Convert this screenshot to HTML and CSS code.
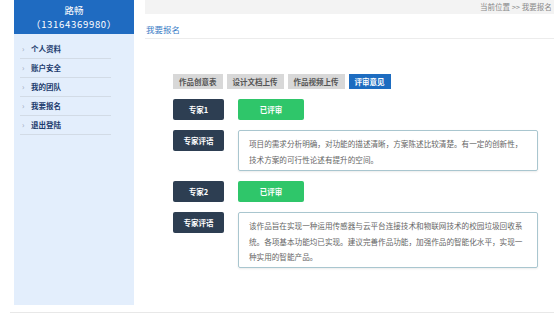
FILE: index.html
```
<!DOCTYPE html>
<html lang="zh">
<head>
<meta charset="utf-8">
<title>我要报名</title>
<link rel="stylesheet" href="styles.css">
</head>
<body>
<div class="page">
  <aside class="sidebar">
    <div class="sidebar-head">
      <div class="name">路畅</div>
      <div class="phone">（13164369980）</div>
    </div>
    <ul class="menu">
      <li><span class="arrow">›</span>个人资料</li>
      <li><span class="arrow">›</span>账户安全</li>
      <li><span class="arrow">›</span>我的团队</li>
      <li><span class="arrow">›</span>我要报名</li>
      <li><span class="arrow">›</span>退出登陆</li>
    </ul>
  </aside>
  <main class="main">
    <div class="topbar"><span class="crumb">当前位置 &gt;&gt; 我要报名</span></div>
    <div class="title">我要报名</div>
    <div class="content">
      <div class="tabs">
        <span class="tab">作品创意表</span>
        <span class="tab">设计文档上传</span>
        <span class="tab">作品视频上传</span>
        <span class="tab active">评审意见</span>
      </div>
      <div class="row">
        <span class="btn dark">专家1</span>
        <span class="btn green">已评审</span>
      </div>
      <div class="row">
        <span class="btn dark">专家评语</span>
        <div class="comment">项目的需求分析明确，对功能的描述清晰，方案陈述比较清楚。有一定的创新性，技术方案的可行性论述有提升的空间。</div>
      </div>
      <div class="row">
        <span class="btn dark">专家2</span>
        <span class="btn green">已评审</span>
      </div>
      <div class="row">
        <span class="btn dark">专家评语</span>
        <div class="comment tall">该作品旨在实现一种运用传感器与云平台连接技术和物联网技术的校园垃圾回收系统。各项基本功能均已实现。建议完善作品功能，加强作品的智能化水平，实现一种实用的智能产品。</div>
      </div>
    </div>
  </main>
</div>
<div class="footer-line"></div>
</body>
</html>
```
FILE: styles.css
```
* { box-sizing: border-box; }
html, body {
  margin: 0;
  padding: 0;
  background: #fff;
  overflow: hidden;
}
body {
  width: 554px;
  height: 319px;
  font-family: "Noto Sans CJK SC", "Noto Sans", sans-serif;
  color: #333;
}
.page {
  display: flex;
  height: 312px;
  padding-left: 14px;
}
.sidebar {
  width: 120px;
  height: 305px;
  background: #e3eefc;
  flex-shrink: 0;
}
.sidebar-head {
  height: 34px;
  background: #1f6bc1;
  color: #fff;
  text-align: center;
  font-size: 9.5px;
  line-height: 14px;
  padding-top: 3px;
}
.sidebar-head .phone {
  letter-spacing: 0.7px;
}
.menu {
  list-style: none;
  margin: 0;
  padding: 6px 0 0 0;
}
.menu li {
  margin: 0 23px 0 6px;
  height: 19px;
  line-height: 18px;
  border-bottom: 1px solid #d2dbe6;
  font-size: 7.5px;
  font-weight: bold;
  color: #1d3c6e;
  padding-left: 2px;
}
.menu .arrow {
  display: inline-block;
  width: 9px;
  color: #9aa9bb;
  font-weight: normal;
  font-size: 8px;
}
.main {
  flex: 1;
  min-width: 0;
  margin-left: 11px;
}
.topbar {
  height: 14px;
  background: #f3f3f3;
  padding-left: 335px;
  white-space: nowrap;
  overflow: hidden;
  font-size: 7.5px;
  line-height: 14px;
  color: #888;
}
.title {
  height: 25px;
  padding: 9px 0 0 1px;
  line-height: 12px;
  font-size: 8.5px;
  color: #3a7cc6;
  border-bottom: 1px solid #ececec;
}
.content {
  padding: 35px 0 0 28px;
}
.tabs {
  display: flex;
  gap: 4px;
}
.tab {
  height: 15px;
  line-height: 15px;
  padding: 0 6px;
  background: #d8d8d8;
  color: #555;
  font-size: 7.5px;
  font-weight: bold;
  white-space: nowrap;
}
.tab.active {
  background: #1d6cc0;
  color: #fff;
}
.row {
  display: flex;
  align-items: flex-start;
  gap: 14px;
  margin-top: 10px;
}
.btn {
  height: 21px;
  line-height: 21px;
  text-align: center;
  font-size: 7.5px;
  font-weight: bold;
  color: #fff;
  border-radius: 2px;
  flex-shrink: 0;
}
.btn.dark {
  width: 51px;
  background: #2d3e52;
}
.btn.green {
  width: 66px;
  background: #2fc66a;
}
.comment {
  width: 300px;
  height: 41px;
  border: 1px solid #a9c6cf;
  border-radius: 2px;
  box-shadow: 0 1px 2px rgba(0,0,0,0.08);
  padding: 5px 9px 0 10px;
  font-size: 7.6px;
  line-height: 15.5px;
  color: #666;
}
.comment.tall {
  height: 56px;
}
.footer-line {
  margin-left: 10px;
  border-top: 1px solid #e8e8e8;
}
```
